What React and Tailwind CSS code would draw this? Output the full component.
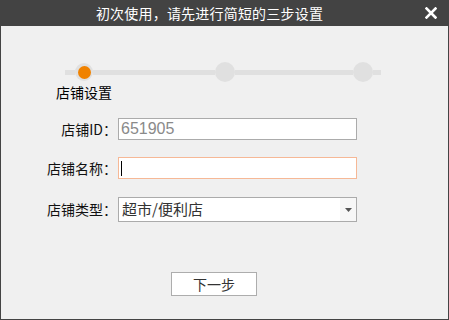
import React from "react";

const font = { fontFamily: '"Noto Sans CJK SC", "Noto Sans", sans-serif' };

export default function App() {
  return (
    <div
      className="w-[449px] h-[320px] flex flex-col bg-[#f0f0f0] overflow-hidden"
      style={font}
    >
      {/* Title bar */}
      <div className="h-[26px] bg-[#434343] flex items-center shrink-0">
        <div className="flex-1 pr-[6px] text-center text-white text-[14px] leading-[26px] tracking-[0.2px]">
          初次使用，请先进行简短的三步设置
        </div>
        <svg
          width="12"
          height="12"
          viewBox="0 0 12 12"
          className="mr-[12px]"
        >
          <path
            d="M1.5 1.5 L10.5 10.5 M10.5 1.5 L1.5 10.5"
            stroke="white"
            strokeWidth="2.6"
            strokeLinecap="square"
          />
        </svg>
      </div>

      {/* Body */}
      <div className="flex-1 flex flex-col border-x border-b border-[#444444] bg-[#f0f0f0]">
        {/* Stepper */}
        <div className="mt-[36px] pl-[64px] flex items-center h-[20px]">
          <div className="w-[10px] h-[5px] bg-[#e0e0e0]" />
          <div className="w-[18px] h-[18px] rounded-full bg-[#e0e0e0] flex items-center justify-center">
            <div className="w-[13px] h-[13px] rounded-full bg-[#f08200]" />
          </div>
          <div className="w-[122px] h-[5px] bg-[#e0e0e0]" />
          <div className="w-[20px] h-[20px] rounded-full bg-[#e0e0e0]" />
          <div className="w-[118px] h-[5px] bg-[#e0e0e0]" />
          <div className="w-[20px] h-[20px] rounded-full bg-[#e0e0e0]" />
          <div className="w-[8px] h-[5px] bg-[#e0e0e0]" />
        </div>
        <div className="pl-[55px] text-[14px] leading-[20px] text-black">
          店铺设置
        </div>

        {/* Form */}
        <div className="mt-[16px] flex flex-col gap-[17px]">
          <div className="flex items-center">
            <div className="w-[116px] text-right text-[14px] text-[#111]">
              店铺ID：
            </div>
            <div
              className="ml-[1px] w-[239px] h-[22px] bg-white border border-[#ababab] flex items-center pl-[2px] text-[16px] text-[#8a8a8a]"
              style={{ fontFamily: '"Liberation Sans", Arial, sans-serif' }}
            >
              651905
            </div>
          </div>
          <div className="flex items-center">
            <div className="w-[116px] text-right text-[14px] text-[#111]">
              店铺名称：
            </div>
            <div className="ml-[1px] w-[239px] h-[22px] bg-white border border-[#f6b896] flex items-center pl-[2px]">
              <div className="w-[1px] h-[15px] bg-black" />
            </div>
          </div>
          <div className="flex items-center mt-[1px]">
            <div className="w-[116px] text-right text-[14px] text-[#111]">
              店铺类型：
            </div>
            <div className="ml-[1px] w-[239px] h-[25px] bg-white border border-[#ababab] flex items-stretch">
              <div className="flex-1 flex items-center pl-[3px] text-[15px] text-[#333]">
                超市/便利店
              </div>
              <div className="w-[16px] bg-[#f7f7f7] flex items-center justify-center">
                <svg width="7" height="4" viewBox="0 0 7 4">
                  <path d="M0 0 H7 L3.5 4 Z" fill="#555" />
                </svg>
              </div>
            </div>
          </div>
        </div>

        {/* Button */}
        <div className="mt-[50px] flex justify-center pr-[21px]">
          <div className="w-[86px] h-[24px] bg-white border border-[#adadad] flex items-center justify-center text-[14px] text-[#333]">
            下一步
          </div>
        </div>
      </div>
    </div>
  );
}
